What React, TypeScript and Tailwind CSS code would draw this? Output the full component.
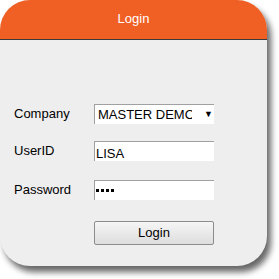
export default function App() {
  return (
    <div className="w-[279px] h-[279px] bg-white font-['Liberation_Sans',Arial,sans-serif] text-[13px] text-black">
      <div className="w-[267px] h-[266px] rounded-[30px] overflow-hidden bg-[#eeeeee] shadow-[4px_6px_6px_rgba(0,0,0,0.6)] flex flex-col">
        {/* Header */}
        <div className="h-[40px] shrink-0 bg-[#f06024] border-b border-[#3a3a3a] flex items-center justify-center text-white pb-[1px]">
          Login
        </div>

        {/* Form */}
        <div className="pt-[64px] flex flex-col">
          <div className="flex items-center h-[20px]">
            <div className="w-[94px] pl-[14px]">Company</div>
            <div className="w-[120px] h-[20px] bg-white border-t border-l border-[#a0a0a0] flex items-center pl-[3px] overflow-hidden">
              <span className="w-[94px] whitespace-nowrap overflow-hidden">MASTER DEMO</span>
              <span className="text-[9px] ml-[12px] leading-none">▼</span>
            </div>
          </div>

          <div className="flex items-center h-[20px] mt-[17px]">
            <div className="w-[94px] pl-[14px]">UserID</div>
            <div className="w-[120px] h-[20px] bg-white border-t border-l border-[#a0a0a0] flex items-end pl-[1px] pb-[1px] leading-none">
              LISA
            </div>
          </div>

          <div className="flex items-center h-[20px] mt-[19px]">
            <div className="w-[94px] pl-[14px]">Password</div>
            <div className="w-[120px] h-[20px] bg-white border-t border-l border-[#a0a0a0] flex items-center pl-[1px] gap-[2px]">
              {Array.from({ length: 4 }).map((_, i) => (
                <span key={i} className="w-[3px] h-[3px] bg-black" />
              ))}
            </div>
          </div>

          <div className="flex mt-[21px] pl-[94px]">
            <div className="w-[120px] h-[24px] rounded-[2px] border border-[#8c8c8c] bg-gradient-to-b from-[#f6f6f6] to-[#dddddd] flex items-center justify-center">
              Login
            </div>
          </div>
        </div>
      </div>
    </div>
  );
}
